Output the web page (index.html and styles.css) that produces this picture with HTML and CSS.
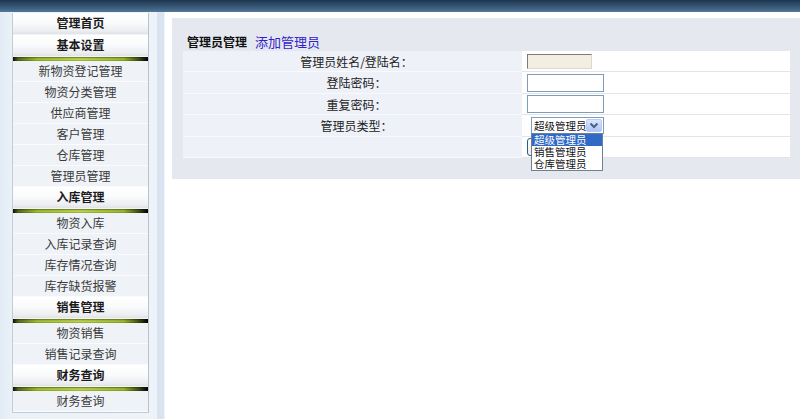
FILE: index.html
```html
<!DOCTYPE html>
<html lang="zh-CN">
<head>
<meta charset="utf-8">
<title>管理员管理</title>
<link rel="stylesheet" href="styles.css">
</head>
<body>
<div class="topbar"></div>
<div class="main">
  <aside class="sidebar">
    <nav class="menu">
      <div class="head">管理首页</div>
      <div class="head">基本设置</div>
      <div class="bar"></div>
      <a class="item">新物资登记管理</a>
      <a class="item">物资分类管理</a>
      <a class="item">供应商管理</a>
      <a class="item">客户管理</a>
      <a class="item">仓库管理</a>
      <a class="item">管理员管理</a>
      <div class="head">入库管理</div>
      <div class="bar"></div>
      <a class="item">物资入库</a>
      <a class="item">入库记录查询</a>
      <a class="item">库存情况查询</a>
      <a class="item">库存缺货报警</a>
      <div class="head">销售管理</div>
      <div class="bar"></div>
      <a class="item">物资销售</a>
      <a class="item">销售记录查询</a>
      <div class="head">财务查询</div>
      <div class="bar"></div>
      <a class="item">财务查询</a>
    </nav>
    <div class="stripe"></div>
  </aside>
  <section class="content">
    <div class="panel">
      <div class="title"><b>管理员管理</b><a class="add">添加管理员</a></div>
      <div class="form">
        <div class="row odd">
          <div class="label">管理员姓名/登陆名：</div>
          <div class="field"><input class="ro" type="text" readonly></div>
        </div>
        <div class="row even">
          <div class="label">登陆密码：</div>
          <div class="field"><input class="txt" type="password"></div>
        </div>
        <div class="row odd">
          <div class="label">重复密码：</div>
          <div class="field"><input class="txt" type="password"></div>
        </div>
        <div class="row even">
          <div class="label">管理员类型：</div>
          <div class="field">
            <div class="select">
              <span class="sel-text">超级管理员</span>
              <span class="sel-arrow"><svg width="14" height="11" viewBox="0 0 14 11"><path d="M3.5 3.5 L7 7 L10.5 3.5" fill="none" stroke="#4d6185" stroke-width="2"/></svg></span>
              <ul class="options">
                <li class="on">超级管理员</li>
                <li>销售管理员</li>
                <li>仓库管理员</li>
              </ul>
            </div>
          </div>
        </div>
        <div class="row odd">
          <div class="label"></div>
          <div class="field"><button class="btn" type="submit" aria-label="提交"></button></div>
        </div>
      </div>
    </div>
  </section>
</div>
</body>
</html>
```

FILE: styles.css
```css
html, body {
  margin: 0;
  padding: 0;
}
body {
  width: 800px;
  height: 419px;
  overflow: hidden;
  background: #ffffff;
  font-family: "Noto Sans CJK SC", "Noto Sans", sans-serif;
  font-size: 12px;
  color: #222;
}
.topbar {
  height: 12px;
  background: linear-gradient(#1d354f, #3f6180 70%, #52789a);
}
.main {
  display: flex;
  height: 407px;
}
.sidebar {
  width: 165px;
  display: flex;
  background: linear-gradient(to right, #e2ebf5, #eaf1f8 12px, #eef3f9);
  padding-left: 12px;
  box-sizing: border-box;
}
.menu {
  width: 137px;
  align-self: flex-start;
  margin-top: 1px;
  border-left: 1px solid #c3cbd4;
  border-right: 1px solid #b9c1ca;
  border-bottom: 1px solid #c3cbd4;
  box-sizing: border-box;
  display: flex;
  flex-direction: column;
  background: #eef2f6;
}
.head {
  height: 22px;
  line-height: 20px;
  box-sizing: border-box;
  text-align: center;
  font-weight: bold;
  color: #1a1a1a;
  background: linear-gradient(#ffffff, #fafbfc 45%, #eceef1 85%, #dfe2e6);
  border-bottom: 1px solid #f1f3f5;
}
.bar {
  height: 4px;
  background:
    linear-gradient(rgba(0,0,0,0.45), rgba(0,0,0,0) 45%, rgba(0,0,0,0) 70%, rgba(0,0,0,0.25)),
    linear-gradient(to right, #0d0f06, #56691a 5px, #9fbe2e 18%, #bcd24c 50%, #9ab82c 82%, #3e4d10 calc(100% - 9px), #000 100%);
}
.item {
  display: block;
  height: 21px;
  line-height: 20px;
  box-sizing: border-box;
  text-align: center;
  color: #3a3a3a;
  background: #eff3f7;
  border-bottom: 1px solid #f9fbfc;
  text-decoration: none;
}
.stripe {
  width: 7px;
  margin-left: 8px;
  background: #d9e4f0;
}
.content {
  flex: 1;
  padding: 6px 0 0 7px;
}
.panel {
  height: 161px;
  box-sizing: border-box;
  background: #e5e9ef;
  padding: 14px 10px 0 11px;
}
.title {
  height: 19px;
  line-height: 19px;
  padding-left: 4px;
  white-space: nowrap;
}
.title b {
  font-size: 12px;
  color: #111;
}
.add {
  margin-left: 8px;
  font-size: 13px;
  color: #3322cc;
  text-decoration: none;
}
.form {
  display: flex;
  flex-direction: column;
}
.row {
  display: flex;
  box-sizing: border-box;
  height: 21px;
  border-bottom: 1px solid #e1e5eb;
}
.row.even {
  height: 22px;
}
.label {
  width: 339px;
  flex: none;
  display: flex;
  align-items: center;
  justify-content: center;
  padding-left: 8px;
  box-sizing: border-box;
  background: #eef1f7;
  color: #222;
  border-bottom: 1px solid #f7f9fc;
  margin-bottom: -1px;
}
.field {
  flex: 1;
  display: flex;
  align-items: center;
  padding-left: 5px;
  background: #ffffff;
}
.ro {
  width: 65px;
  height: 15px;
  box-sizing: border-box;
  margin: 0;
  padding: 0;
  background: #f4ede1;
  border-style: solid;
  border-width: 1px;
  border-color: #7c7c7c #ddd8cf #ddd8cf #7c7c7c;
}
.txt {
  width: 77px;
  height: 18px;
  box-sizing: border-box;
  margin: 0;
  padding: 0;
  background: #fff;
  border: 1px solid #7f9db9;
}
.select {
  position: relative;
  margin-left: 4px;
  width: 73px;
  height: 17px;
  box-sizing: border-box;
  border: 1px solid #7f9db9;
  background: #fff;
  display: flex;
  align-items: center;
  font-size: 10.5px;
}
.sel-text {
  padding-left: 2px;
  line-height: 15px;
  color: #111;
}
.sel-arrow {
  position: absolute;
  right: 1px;
  top: 1px;
  width: 16px;
  height: 13px;
  box-sizing: border-box;
  border: 1px solid #b7cbf2;
  border-radius: 2px;
  background: linear-gradient(#dbe6fd, #bfd1f8 60%, #afc4f3);
  display: flex;
  align-items: center;
  justify-content: center;
}
.sel-arrow svg {
  display: block;
}
.options {
  position: absolute;
  left: -1px;
  top: 15px;
  width: 72px;
  margin: 0;
  padding: 0;
  list-style: none;
  background: #fff;
  border: 1px solid #6f7f94;
  box-sizing: border-box;
  z-index: 2;
}
.options li {
  height: 12px;
  line-height: 12px;
  padding-left: 2px;
  font-family: "Liberation Sans", "Noto Sans CJK SC", sans-serif;
  font-size: 10.5px;
  color: #111;
  white-space: nowrap;
  overflow: hidden;
}
.options li.on {
  background: #316ac5;
  color: #fff;
}
.btn {
  width: 50px;
  height: 18px;
  margin: 0;
  padding: 0;
  border: 1px solid #2c5b8e;
  border-radius: 3px;
  background: linear-gradient(#ffffff, #ecebe6);
}
```
